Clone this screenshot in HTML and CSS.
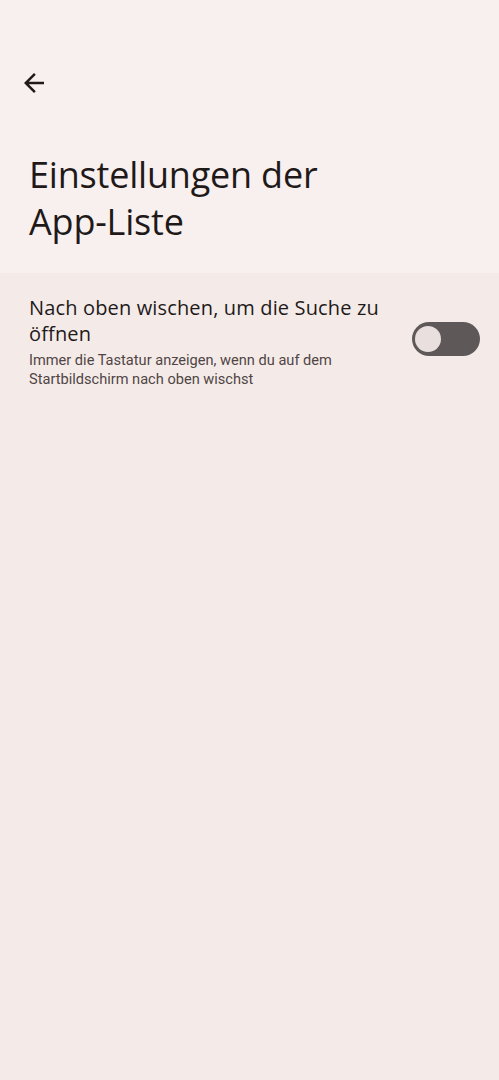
FILE: index.html
```html
<!DOCTYPE html>
<html lang="de">
<head>
<meta charset="utf-8">
<link rel="stylesheet" href="styles.css">
</head>
<body>
<div class="screen">
  <header class="header">
    <button class="back" aria-label="Zurück">
      <svg viewBox="0 0 24 24" width="30" height="30"><path d="M20 11H7.83l5.59-5.59L12 4l-8 8 8 8 1.41-1.41L7.83 13H20v-2z" fill="#1f1a19"/></svg>
    </button>
    <h1 class="title">Einstellungen der App-Liste</h1>
  </header>
  <main class="content">
    <div class="item">
      <div class="item-text">
        <div class="item-title">Nach oben wischen, um die Suche zu öffnen</div>
        <div class="item-sub">Immer die Tastatur anzeigen, wenn du auf dem Startbildschirm nach oben wischst</div>
      </div>
      <div class="switch"><div class="thumb"></div></div>
    </div>
  </main>
</div>
</body>
</html>
```
FILE: styles.css
```css
html, body { margin: 0; padding: 0; }
body { background: #f4ebe9; font-family: "Open Sans", Roboto, sans-serif; color: #1f1a19; }
.screen { width: 499px; min-height: 1080px; display: flex; flex-direction: column; }
.header { background: #f8f0ef; height: 273px; box-sizing: border-box; padding-top: 68px; }
.back { display: block; margin-left: 19px; width: 30px; height: 30px; padding: 0; border: 0; background: none; }
.back svg { display: block; }
.title { margin: 53px 0 0 29px; font-weight: 400; font-size: 36px; line-height: 47px; width: 330px; letter-spacing: -0.2px; }
.content { flex: 1; }
.item { display: flex; align-items: center; padding: 22px 19px 0 29px; }
.item-text { flex: 1; }
.item-title { font-size: 20px; line-height: 26px; width: 365px; letter-spacing: 0.15px; }
.item-sub { font-family: Roboto, sans-serif; font-size: 14.6px; line-height: 19px; color: #504544; margin-top: 4px; width: 320px; }
.switch { width: 68px; height: 34px; border-radius: 17px; background: #5e5958; position: relative; flex: none; margin-top: -6px; }
.thumb { position: absolute; left: 3px; top: 4px; width: 26px; height: 26px; border-radius: 50%; background: #e8dfde; }
```
